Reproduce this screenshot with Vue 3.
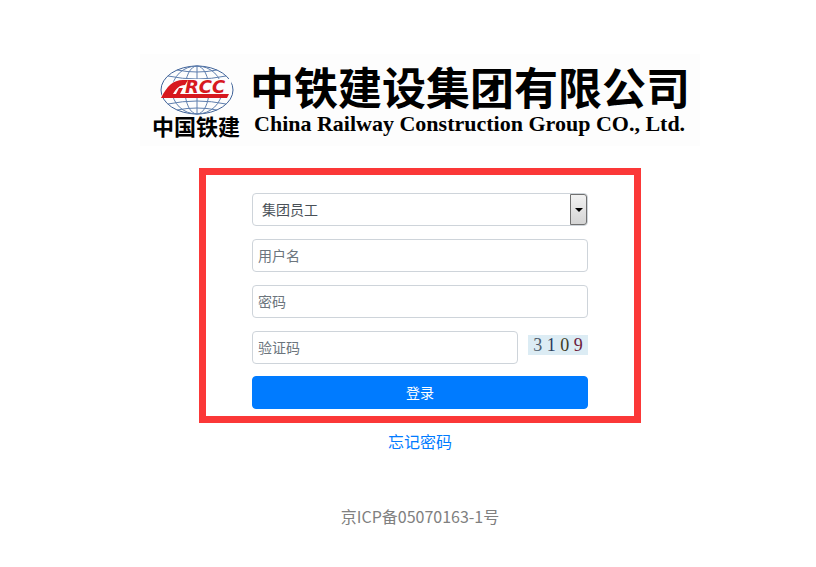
<script setup>
import { ref } from 'vue'

const userType = ref('group')
const username = ref('')
const password = ref('')
const code = ref('')

// 验证码
const captcha = [
  { char: '3', cls: 'slate' },
  { char: '1', cls: 'navy' },
  { char: '0', cls: 'olive' },
  { char: '9', cls: 'plum' },
]
</script>

<template>
  <div class="login-page">
    <header class="banner">
      <div class="logo">
        <svg class="globe" viewBox="-2 0 80 52" role="img" aria-label="CRCC">
          <g fill="none" stroke="#5f7fae" stroke-width="1">
            <ellipse cx="39" cy="26" rx="36" ry="24" stroke="#3f6298" />
            <ellipse cx="39" cy="26" rx="25" ry="24" />
            <ellipse cx="39" cy="26" rx="12" ry="24" />
            <path d="M39 2V50M10 12Q39 18 68 12M10 40Q39 34 68 40M19 6Q39 10 59 6M19 46Q39 42 59 46" />
          </g>
          <path d="M2 34C9 22 15 15 26 15H74L71 34H2Z" fill="#fdfdfd" />
          <path d="M3 34C9 22 15 16 25 16H30L27 21C21 21 18 25 15 30H71L69 34Z" fill="#d7191f" />
          <path d="M18 30L21 24H25L22 30Z" fill="#d7191f" />
          <text x="27" y="29" class="globe-text">RCC</text>
        </svg>
        <div class="logo-name">中国铁建</div>
      </div>
      <div class="company">
        <h1>中铁建设集团有限公司</h1>
        <p>China Railway Construction Group CO., Ltd.</p>
      </div>
    </header>

    <form class="login-form" @submit.prevent>
      <div class="select-wrap">
        <select v-model="userType" aria-label="用户类型">
          <option value="group">集团员工</option>
        </select>
        <span class="select-arrow"></span>
      </div>
      <input v-model="username" type="text" placeholder="用户名" aria-label="用户名">
      <input v-model="password" type="password" placeholder="密码" aria-label="密码">
      <div class="code-row">
        <input v-model="code" type="text" placeholder="验证码" aria-label="验证码">
        <div class="captcha">
          <span v-for="item in captcha" :key="item.char" :class="item.cls">{{ item.char }}</span>
        </div>
      </div>
      <button type="submit">登录</button>
    </form>

    <a class="forgot" href="#">忘记密码</a>
    <footer>京ICP备05070163-1号</footer>
  </div>
</template>

<style>
body {
  margin: 0;
  background: #fff;
}
</style>

<style scoped>
.login-page {
  display: flex;
  flex-direction: column;
  align-items: center;
  padding: 54px 0 24px 24px;
  font-family: "Noto Sans CJK SC", sans-serif;
}

.banner {
  display: flex;
  box-sizing: border-box;
  width: 100%;
  max-width: 560px;
  height: 92px;
  padding: 10px 12px 0;
  background: #fdfdfd;
  color: #000;
}

.logo {
  width: 90px;
  margin-right: 10px;
  text-align: center;
}

.globe {
  display: block;
  width: 80px;
  height: 52px;
  margin: 0 auto;
}

.globe-text {
  font: italic bold 18px "DejaVu Sans", sans-serif;
  fill: #d7191f;
}

.logo-name {
  font-size: 22px;
  line-height: 18px;
  font-weight: bold;
  white-space: nowrap;
}

.company {
  white-space: nowrap;
}

.company h1 {
  margin: 0;
  font-size: 44px;
  line-height: 44px;
  font-weight: bold;
}

.company p {
  margin: 5px 0 0;
  padding-left: 4px;
  font: bold 22px/22px "Liberation Serif", serif;
}

.login-form {
  display: flex;
  flex-direction: column;
  gap: 13px;
  box-sizing: border-box;
  width: 100%;
  max-width: 442px;
  margin-top: 22px;
  padding: 18px 46px 7px;
  border: 7px solid #fb3838;
}

input,
select,
button {
  box-sizing: border-box;
  width: 100%;
  height: 33px;
  margin: 0;
  border: 1px solid #ced4da;
  border-radius: 4px;
  background: #fff;
  color: #495057;
  font-family: inherit;
  font-size: 14px;
}

input {
  padding: 0 5px 2px;
}

input::placeholder {
  color: #6c757d;
  opacity: 1;
}

.select-wrap {
  position: relative;
  height: 33px;
}

select {
  padding: 0 24px 2px 9px;
  appearance: none;
}

.select-arrow {
  display: flex;
  align-items: center;
  justify-content: center;
  position: absolute;
  top: 1px;
  right: 1px;
  box-sizing: border-box;
  width: 17px;
  height: 31px;
  border: 1px solid #707070;
  border-radius: 0 3px 3px 0;
  background: linear-gradient(#f2f2f2, #d4d4d4);
  pointer-events: none;
}

.select-arrow::after {
  content: "";
  border: 4px solid transparent;
  border-top-color: #000;
  border-bottom: 0;
}

.code-row {
  display: flex;
  align-items: center;
  gap: 10px;
}

.code-row input {
  flex: 1;
  min-width: 0;
}

.captcha {
  display: flex;
  justify-content: space-around;
  box-sizing: border-box;
  width: 60px;
  height: 20px;
  margin-bottom: 5px;
  padding: 0 3px;
  background: #dcecf4;
  font: 18px/20px "Liberation Serif", serif;
}

.slate { color: #4c5c6c; }
.navy { color: #2c3c5c; }
.olive { color: #3c3c24; }
.plum { color: #6c1c3c; }

button {
  margin-top: -1px;
  padding: 0 0 2px;
  border-color: #007bff;
  background: #007bff;
  color: #fff;
  cursor: pointer;
}

.forgot {
  margin-top: 6px;
  color: #007bff;
  font-size: 16px;
  line-height: 24px;
  text-decoration: none;
}

footer {
  margin-top: 51px;
  color: #808080;
  font-size: 16px;
  line-height: 24px;
}
</style>
